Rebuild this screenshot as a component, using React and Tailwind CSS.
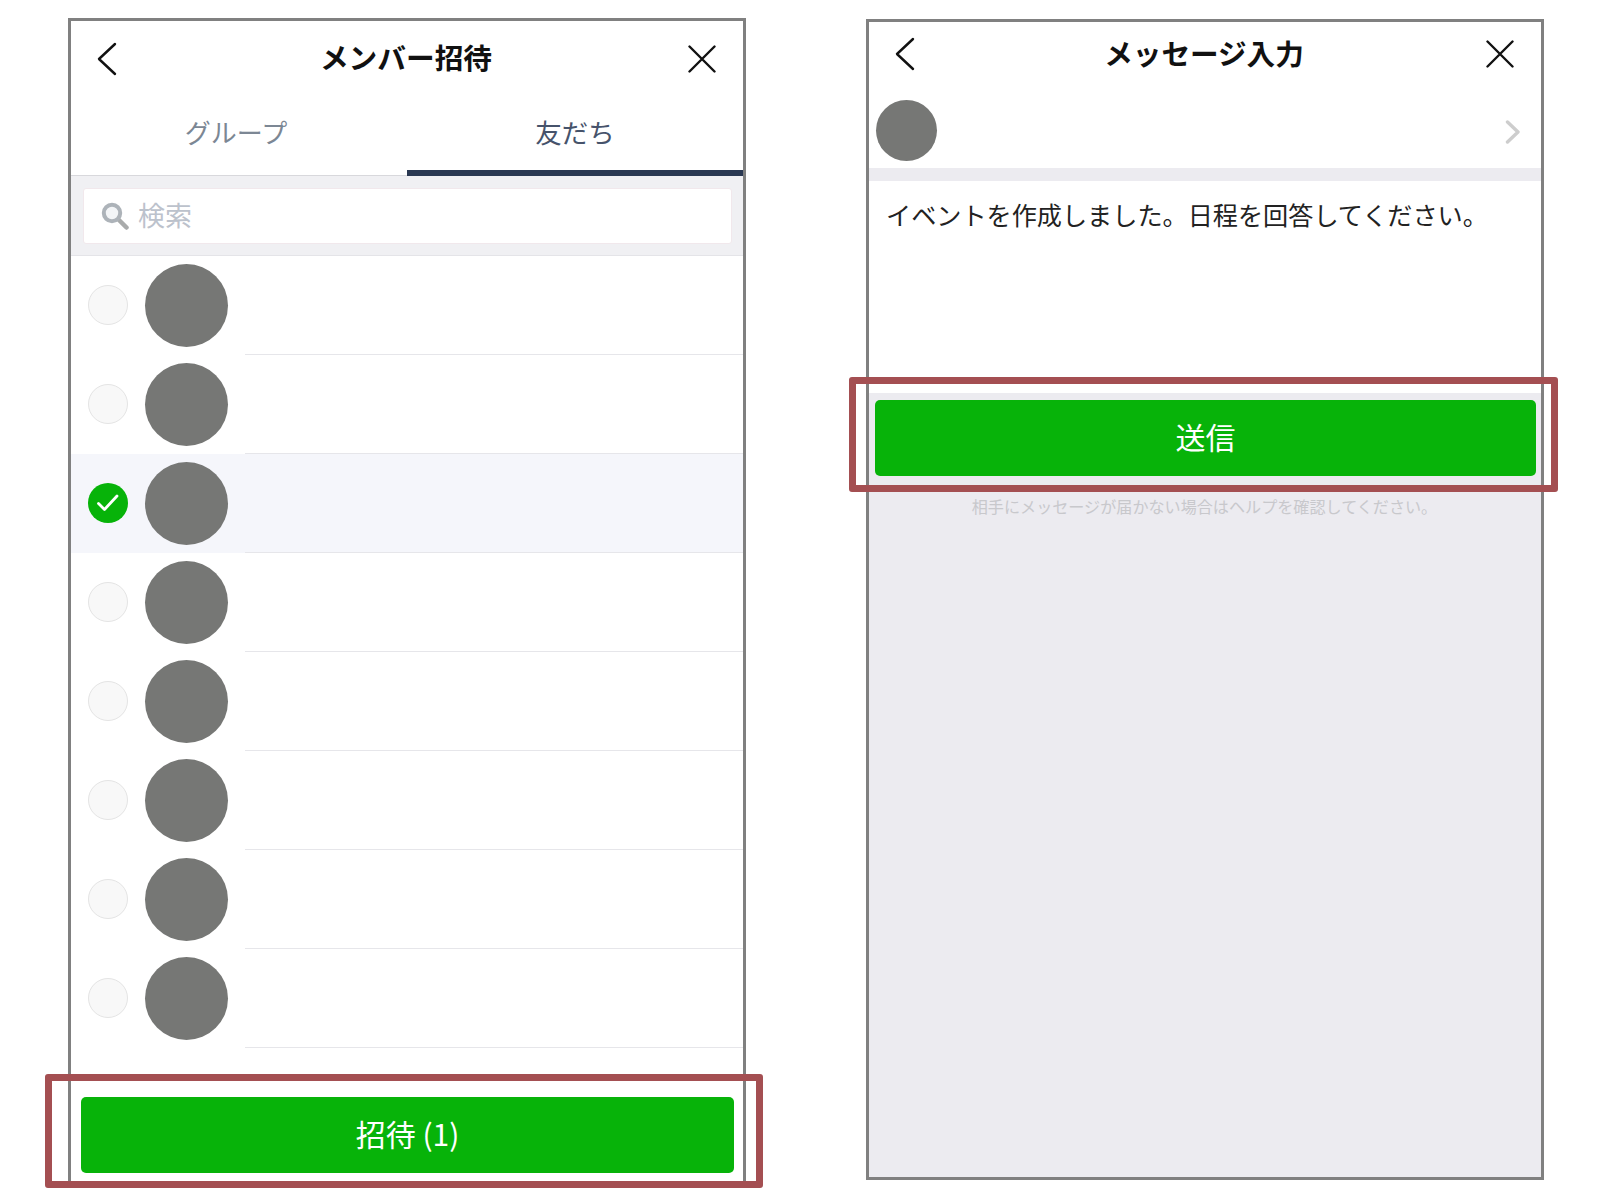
const FONT = "font-['Noto_Sans_CJK_JP','Noto_Sans',sans-serif]";

const ROWS = [false, false, true, false, false, false, false, false];

function BackIcon() {
  return (
    <svg width="21" height="34" viewBox="0 0 21 34" fill="none" stroke="#111" strokeWidth="2.4" strokeLinecap="round" strokeLinejoin="round">
      <path d="M19 2 L3 17 L19 32" />
    </svg>
  );
}

function CloseIcon() {
  return (
    <svg className="justify-self-end" width="28" height="28" viewBox="0 0 28 28" fill="none" stroke="#111" strokeWidth="2.4" strokeLinecap="round">
      <path d="M1.5 1.5 L26.5 26.5 M26.5 1.5 L1.5 26.5" />
    </svg>
  );
}

function SearchIcon() {
  return (
    <svg width="28" height="28" viewBox="0 0 28 28" fill="none">
      <path d="M18 18 L25.5 25.5" stroke="#a9abab" strokeWidth="4.5" strokeLinecap="round" />
      <circle cx="11" cy="11" r="8.2" fill="#f3f5f7" stroke="#adb3b9" strokeWidth="4" />
    </svg>
  );
}

function Row({ selected }) {
  return (
    <div className={`flex h-[99px] items-stretch ${selected ? 'bg-[#f5f6fb]' : 'bg-white'}`}>
      <div className="flex w-[174px] shrink-0 items-center pl-[17px]">
        {selected ? (
          <div className="-mt-[2px] flex h-[40px] w-[40px] items-center justify-center rounded-full bg-[#07b309]">
            <svg width="24" height="20" viewBox="0 0 24 20" fill="none" stroke="#fff" strokeWidth="2.8" strokeLinecap="round" strokeLinejoin="round">
              <path d="M2.5 10.5 L8.5 16.5 L21 3" />
            </svg>
          </div>
        ) : (
          <div className="-mt-[2px] h-[40px] w-[40px] rounded-full border border-[#e4e4e4] bg-[#f8f8f8]" />
        )}
        <div className="ml-[17px] h-[83px] w-[83px] shrink-0 rounded-full bg-[#767775]" />
      </div>
      <div className="flex-1 border-b border-[#e6e6ea]" />
    </div>
  );
}

export default function App() {
  return (
    <div className={`${FONT} relative flex h-[1200px] w-[1600px] items-start overflow-hidden bg-white pl-[68px] pt-[18px]`}>
      {/* invite panel */}
      <div className="flex h-[1170px] w-[678px] shrink-0 flex-col border-[3px] border-b-0 border-[#808080]">
        <div className="grid h-[75px] grid-cols-[1fr_auto_1fr] items-center pl-[25px] pr-[27px]">
          <BackIcon />
          <span className="-mt-[4px] text-[28.7px] font-bold text-[#111]">メンバー招待</span>
          <CloseIcon />
        </div>
        <div className="flex h-[80px] border-b border-[#d8d8dc]">
          <div className="flex w-1/2 justify-center pr-[6px] pt-[16px] text-[26px] text-[#7c8794]">グループ</div>
          <div className="-mb-px flex w-1/2 justify-center border-b-[6px] border-[#2a3852] pt-[16px] text-[26.5px] text-[#46536b]">友だち</div>
        </div>
        <div className="h-[80px] border-b border-[#e4e4e8] bg-[#f0f0f3] pl-[12px] pr-[11px] pt-[12px]">
          <div className="flex h-[56px] items-center rounded-[3px] border border-[#f1e8ec] bg-white pl-[17px]">
            <SearchIcon />
            <span className="-mt-[2px] ml-[9px] text-[27px] text-[#bcc2cc]">検索</span>
          </div>
        </div>
        <div>
          {ROWS.map((selected, i) => (
            <Row key={i} selected={selected} />
          ))}
        </div>
        <div className="ml-[10px] mr-[9px] mt-[49px] flex h-[76px] items-center justify-center rounded-[5px] bg-[#07b309] pb-[4px] text-[30px] text-white">
          招待 (1)
        </div>
      </div>

      {/* message panel */}
      <div className="ml-[120px] mt-[1px] flex h-[1161px] w-[678px] shrink-0 flex-col border-[3px] border-[#808080] bg-white">
        <div className="grid h-[72px] grid-cols-[1fr_auto_1fr] items-center pb-[9px] pl-[25px] pr-[27px]">
          <BackIcon />
          <span className="-mt-[1px] text-[28.6px] font-bold text-[#111]">メッセージ入力</span>
          <CloseIcon />
        </div>
        <div className="flex h-[74px] items-start justify-between pl-[7px] pr-[20px] pt-[6px]">
          <div className="h-[61px] w-[61px] rounded-full bg-[#767775]" />
          <svg className="mt-[20px]" width="16" height="24" viewBox="0 0 16 24" fill="none" stroke="#cdcdcd" strokeWidth="3.4" strokeLinecap="round" strokeLinejoin="round">
            <path d="M2.5 2 L13 12 L2.5 22" />
          </svg>
        </div>
        <div className="h-[13px] bg-[#ecebf0]" />
        <div className="h-[212px] pl-[17px] pt-[15px] text-[25.15px] text-[#222]">
          イベントを作成しました。日程を回答してください。
        </div>
        <div className="flex-1 bg-[#ecebf0] pl-[6px] pr-[5px] pt-[7px]">
          <div className="flex h-[76px] items-center justify-center rounded-[5px] bg-[#07b309] pb-[4px] text-[30px] text-white">送信</div>
          <div className="mt-[19px] pr-[2px] text-center text-[16.1px] leading-[22px] text-[#c8c8cc]">
            相手にメッセージが届かない場合はヘルプを確認してください。
          </div>
        </div>
      </div>

      {/* red highlight frames */}
      <div className="absolute left-[45px] top-[1074px] h-[114px] w-[718px] rounded-[3px] border-[7px] border-[#a44f52]" />
      <div className="absolute left-[849px] top-[377px] h-[115px] w-[709px] rounded-[3px] border-[7px] border-[#a44f52]" />
    </div>
  );
}
